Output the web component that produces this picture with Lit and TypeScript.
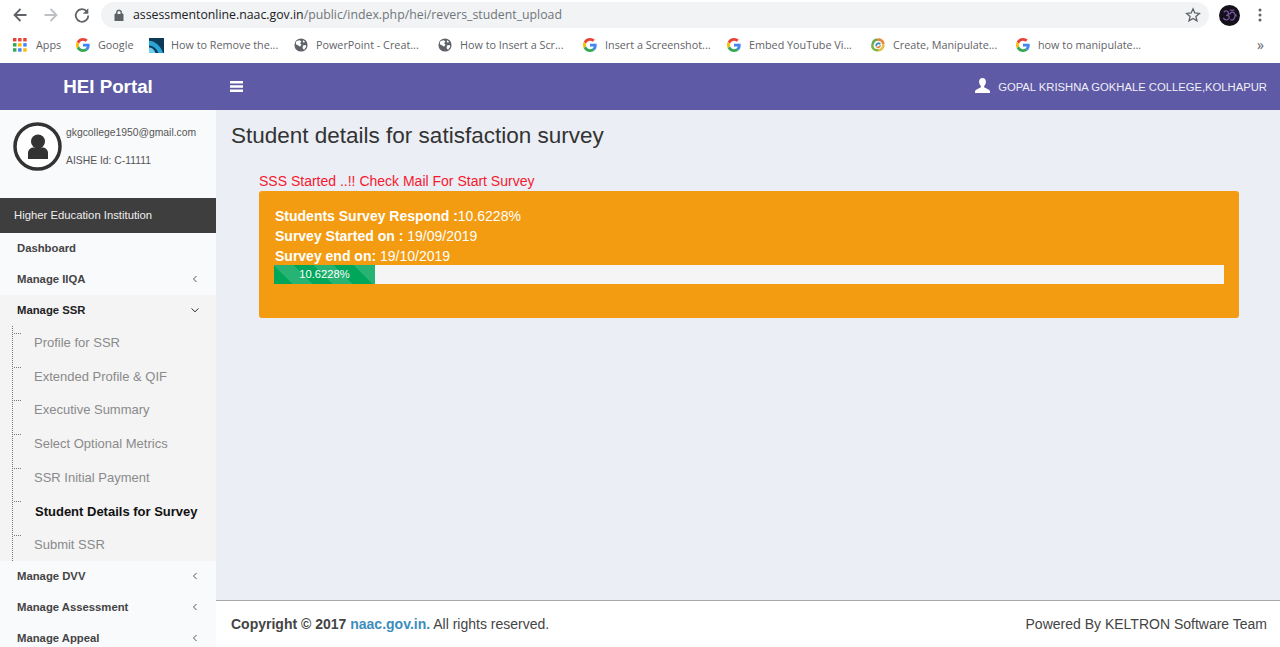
import { LitElement, html, css, svg } from "lit";
import { customElement } from "lit/decorators.js";

const gIcon = html`<svg class="fav" viewBox="0 0 48 48"><path fill="#EA4335" d="M24 9.500c3.500 0 6.700 1.200 9.200 3.600l6.900-6.900C35.900 2.400 30.500 0 24 0 14.600 0 6.500 5.400 2.600 13.200l8 6.200C12.500 13.600 17.800 9.500 24 9.500z"/><path fill="#4285F4" d="M47 24.500c0-1.600-.1-3.100-.4-4.500H24v9h12.900c-.6 3-2.300 5.500-4.800 7.200l7.700 6c4.500-4.200 7.200-10.300 7.200-17.700z"/><path fill="#FBBC05" d="M10.500 28.600c-.5-1.400-.8-3-.8-4.600s.3-3.200.8-4.600l-8-6.200C.9 16.500 0 20.100 0 24s.9 7.500 2.600 10.800l7.900-6.200z"/><path fill="#34A853" d="M24 48c6.500 0 11.900-2.100 15.900-5.800l-7.700-6c-2.200 1.500-4.900 2.300-8.200 2.300-6.200 0-11.500-4.100-13.400-9.900l-8 6.200C6.500 42.600 14.600 48 24 48z"/></svg>`;

const globe = html`<svg class="fav" viewBox="0 0 16 16"><circle cx="8" cy="8" r="7.500" fill="#5f6368"/><path fill="#fff" d="M3 3.500 6.500 2.500 8.500 4 7 6 8.500 7.500 7 10 5 8.500 2.500 7.500 2 5.500zM10 8.500l3.500-.5.500 2-2.500 3.500-1.500-1.500zM10.500 2.500l2 1.500-1 1.500-1.500-1z"/></svg>`;

const appsIcon = html`<svg class="fav apps" viewBox="0 0 13 13">${[
  "#ea4335", "#ea4335", "#ea4335",
  "#34a853", "#fbbc05", "#4285f4",
  "#34a853", "#4285f4", "#fbbc05",
].map((c, i) => svg`<rect x=${(i % 3) * 4.75} y=${Math.floor(i / 3) * 4.75} width="3.200" height="3.200" fill=${c}></rect>`)}</svg>`;

const tileIcon = html`<svg class="fav tile" viewBox="0 0 16 16"><rect width="16" height="16" fill="#0d3b57"/><path d="M0 3 C6 3 12 8 15 16 H10 C8 11 4 8 0 8z" fill="#2aa5d8"/><path d="M0 10 C3 10 6 12 7 16 H0z" fill="#6fd0f0"/></svg>`;

const swirlIcon = html`<svg class="fav" viewBox="0 0 16 16" fill="none" stroke-width="3" stroke-linecap="round"><path d="M8 2C11 1.500 13.500 3.500 14 6" stroke="#e8873a"/><path d="M14 8c.5 3-2 5.500-5 6" stroke="#e3c04a"/><path d="M7 14c-3 0-5.500-2.500-5.500-5.500" stroke="#7cb342"/><path d="M2 6.500C2.500 4 4 2.500 6 2" stroke="#6aa84f"/><path d="M6 8.500C6 6.500 8 5.500 10 6.500" stroke="#3f8fc4" stroke-width="2.200"/><path d="M10.500 9C10 10.500 8.500 11 7 10.500" stroke="#e07f3a" stroke-width="1.800"/></svg>`;

const bookmarks = [
  { icon: appsIcon, label: "Apps", w: 63 },
  { icon: gIcon, label: "Google", w: 73 },
  { icon: tileIcon, label: "How to Remove the...", w: 145 },
  { icon: globe, label: "PowerPoint - Creat...", w: 144 },
  { icon: globe, label: "How to Insert a Scr...", w: 145 },
  { icon: gIcon, label: "Insert a Screenshot...", w: 144 },
  { icon: gIcon, label: "Embed YouTube Vi...", w: 144 },
  { icon: swirlIcon, label: "Create, Manipulate...", w: 145 },
  { icon: gIcon, label: "how to manipulate...", w: 140 },
];

const chevLeft = html`<svg class="chev" viewBox="0 0 10 10"><path d="M6.500 2 3.500 5l3 3" fill="none" stroke="#555" stroke-width="1"/></svg>`;
const chevDown = html`<svg class="chev" viewBox="0 0 10 10"><path d="M1.500 3.500 5 6.800l3.500-3.300" fill="none" stroke="#333" stroke-width="1"/></svg>`;

const submenu = [
  "Profile for SSR",
  "Extended Profile & QIF",
  "Executive Summary",
  "Select Optional Metrics",
  "SSR Initial Payment",
  "Student Details for Survey",
  "Submit SSR",
];

@customElement("app-root")
export class AppRoot extends LitElement {
  static styles = css`
    :host {
      display: flex;
      flex-direction: column;
      width: 1280px;
      height: 647px;
      overflow: hidden;
      background: #fff;
      font-family: "Liberation Sans", Arial, sans-serif;
    }
    .chrome {
      height: 62px;
      flex: none;
      display: flex;
      flex-direction: column;
      background: #fff;
      font-family: "Open Sans", "Liberation Sans", sans-serif;
    }
    .toolbar {
      height: 30px;
      flex: none;
      display: flex;
      align-items: center;
      padding: 0 0 0 10px;
    }
    .nav {
      width: 20px;
      height: 20px;
      margin-right: 11px;
      flex: none;
    }
    .reload {
      width: 18px;
      height: 18px;
      margin-left: 1px;
    }
    .url {
      width: 1108px;
      margin-left: -1px;
      height: 26px;
      flex: none;
      border-radius: 13px;
      background: #f1f3f4;
      display: flex;
      align-items: center;
      padding: 0 8px 0 12px;
      box-sizing: border-box;
      font-size: 12.300px;
      color: #70757a;
      margin-top: -1px;
    }
    .url b {
      font-weight: 400;
      color: #202124;
    }
    .lock {
      width: 12px;
      height: 12px;
      margin-right: 8px;
      flex: none;
    }
    .urltext {
      flex: 1;
      white-space: nowrap;
    }
    .star {
      width: 16px;
      height: 16px;
      flex: none;
    }
    .avatar {
      width: 21px;
      height: 21px;
      margin-left: 10px;
      flex: none;
    }
    .dots {
      width: 16px;
      height: 16px;
      margin-left: 12px;
      flex: none;
    }
    .bookmarks {
      flex: 1;
      display: flex;
      align-items: center;
      padding: 0 0 2px 13px;
      font-size: 10.800px;
      color: #5f6368;
    }
    .bm {
      display: flex;
      align-items: center;
      gap: 8px;
      flex: none;
      white-space: nowrap;
    }
    .bm span {
      margin-top: -2px;
    }
    .fav {
      width: 14px;
      height: 14px;
      flex: none;
    }
    .tile {
      width: 15px;
      height: 15px;
      margin-right: -1px;
    }
    .apps {
      margin-right: 1px;
    }
    .more {
      margin-left: auto;
      margin-right: 16px;
      font-size: 14px;
      line-height: 14px;
      color: #5f6368;
    }
    .topbar {
      height: 47px;
      margin-top: 1px;
      flex: none;
      background: #5e5aa5;
      display: flex;
      align-items: center;
      color: #fff;
    }
    .brand {
      width: 216px;
      flex: none;
      text-align: center;
      font-size: 18.750px;
      font-weight: 700;
    }
    .burger {
      width: 13px;
      height: 11px;
      margin-left: 14px;
      flex: none;
    }
    .user {
      margin-left: auto;
      margin-right: 13px;
      display: flex;
      align-items: center;
      gap: 8px;
      font-size: 11.250px;
      color: #f0eff8;
    }
    .user svg {
      width: 15px;
      height: 15px;
      margin-top: -3px;
    }
    .body {
      flex: 1;
      min-height: 0;
      display: flex;
    }
    .side {
      width: 216px;
      flex: none;
      background: #f9fafc;
      color: #444;
      overflow: hidden;
    }
    .panel {
      height: 88px;
      display: flex;
      box-sizing: border-box;
      padding: 12px 0 0 13px;
    }
    .pic {
      width: 49px;
      height: 49px;
      flex: none;
    }
    .info {
      margin-left: 4px;
      font-size: 10.350px;
      color: #555;
      line-height: 12px;
      padding-top: 5px;
    }
    .info div + div {
      margin-top: 16px;
    }
    .head {
      height: 35px;
      box-sizing: border-box;
      padding: 0 0 2px 14px;
      background: #3e3e3e;
      color: #eee;
      font-size: 11.300px;
      display: flex;
      align-items: center;
    }
    .item {
      height: 31px;
      box-sizing: border-box;
      display: flex;
      align-items: center;
      justify-content: space-between;
      padding: 0 16px 2px 17px;
      font-size: 11.300px;
      font-weight: 700;
      color: #444;
    }
    .item.open {
      background: #f4f4f5;
      color: #222;
    }
    .chev {
      width: 10px;
      height: 10px;
      flex: none;
    }
    .sub {
      background: #f4f4f5;
      height: 235px;
      padding-left: 12px;
    }
    .sub-inner {
      border-left: 1px dotted #777;
      height: 235px;
    }
    .subitem {
      height: 33.700px;
      box-sizing: border-box;
      padding: 0 0 0.500px 21px;
      display: flex;
      align-items: center;
      font-size: 13px;
      color: #8a8a8a;
      position: relative;
    }
    .subitem::before {
      content: "";
      position: absolute;
      left: 1px;
      top: 7px;
      width: 7px;
      border-top: 1px dotted #777;
    }
    .subitem.active {
      color: #111;
      font-weight: 700;
      padding-left: 22px;
      padding-bottom: 0;
    }
    .main {
      flex: 1;
      min-width: 0;
      display: flex;
      flex-direction: column;
      background: #ebeef4;
    }
    .content {
      flex: 1;
      min-height: 0;
      padding: 12px 41px 0 15px;
    }
    h1 {
      margin: 0;
      font-size: 22.500px;
      line-height: 28px;
      font-weight: 400;
      color: #333;
    }
    .card-wrap {
      padding: 22px 0 0 28px;
    }
    .notice {
      font-size: 14px;
      line-height: 19px;
      color: #f5192f;
    }
    .card {
      background: #f39c12;
      border-radius: 3px;
      height: 127px;
      box-sizing: border-box;
      padding: 15px 15px 0 16px;
      color: #fff;
      font-size: 14px;
      line-height: 20px;
    }
    .bar {
      height: 19px;
      background: #f5f5f5;
      margin: -1px 0 0 -1px;
    }
    .fill {
      height: 100%;
      background-color: #00a65a;
      background-image: linear-gradient(
        45deg,
        rgba(255, 255, 255, 0.15) 25%,
        transparent 25%,
        transparent 50%,
        rgba(255, 255, 255, 0.15) 50%,
        rgba(255, 255, 255, 0.15) 75%,
        transparent 75%,
        transparent
      );
      background-size: 40px 40px;
      font-size: 11.200px;
      line-height: 19px;
      text-align: center;
      color: #fff;
    }
    .footer {
      height: 47px;
      flex: none;
      box-sizing: border-box;
      border-top: 1px solid #a8a8a8;
      background: #fff;
      display: flex;
      align-items: center;
      justify-content: space-between;
      padding: 0 13px 0 15px;
      font-size: 14px;
      color: #444;
    }
    .footer a {
      color: #3c8dbc;
      text-decoration: none;
    }
  `;

  render() {
    const pct = 10.6228;
    return html`
      <div class="chrome">
        <div class="toolbar">
          <svg class="nav" viewBox="0 0 20 20"><path d="M16.500 10H5M10.500 4 4.500 10l6 6" fill="none" stroke="#5f6368" stroke-width="1.800"/></svg>
          <svg class="nav" viewBox="0 0 20 20"><path d="M3.500 10H15M9.500 4l6 6-6 6" fill="none" stroke="#bdc1c6" stroke-width="1.800"/></svg>
          <svg class="nav reload" viewBox="0 0 20 20"><path d="M15.500 6.200A7 7 0 1 0 17 10.500" fill="none" stroke="#5f6368" stroke-width="2"/><path d="M17 2.500v6h-6z" fill="#5f6368"/></svg>
          <div class="url">
            <svg class="lock" viewBox="0 0 12 12"><path d="M2 5h8v7H2zM3.500 5V3.500a2.500 2.500 0 0 1 5 0V5" fill="#5f6368" stroke="#5f6368"/><path d="M4.500 5V3.500a1.500 1.500 0 0 1 3 0V5z" fill="#f1f3f4"/></svg>
            <span class="urltext"><b>assessmentonline.naac.gov.in</b>/public/index.php/hei/revers_student_upload</span>
            <svg class="star" viewBox="0 0 16 16"><path d="M8 1.800 9.800 6l4.600.4-3.500 3 1.100 4.500L8 11.500 4 13.900l1.100-4.500-3.500-3L6.200 6z" fill="none" stroke="#5f6368" stroke-width="1.300"/></svg>
          </div>
          <svg class="avatar" viewBox="0 0 22 22"><circle cx="11" cy="11" r="11" fill="#15111a"/><path d="M5 7.500C7 5.500 10 6 10 8.500S7.500 11 7.500 11c3-.5 3.500 1.500 3 3s-4 3-6-.5M11 10c1-2.500 3-3 4.500-2s1.500 4 .5 6-3 2.500-4 1M11.500 5c1.500 1 3 1 4.500 0M16.500 10.500c1-.5 1.500 0 1.500 1.500" fill="none" stroke="#7a5aa8" stroke-width="1.300"/></svg>
          <svg class="dots" viewBox="0 0 16 16"><circle cx="8" cy="3" r="1.500" fill="#5f6368"/><circle cx="8" cy="8" r="1.500" fill="#5f6368"/><circle cx="8" cy="13" r="1.500" fill="#5f6368"/></svg>
        </div>
        <div class="bookmarks">
          ${bookmarks.map(
            (b) => html`<div class="bm" style="width:${b.w}px">${b.icon}<span>${b.label}</span></div>`
          )}
          <span class="more">»</span>
        </div>
      </div>
      <div class="topbar">
        <div class="brand">HEI Portal</div>
        <svg class="burger" viewBox="0 0 13 11"><path d="M0 0h13v2.400H0zM0 4.300h13v2.400H0zM0 8.600h13V11H0z" fill="#fff"/></svg>
        <div class="user">
          <svg viewBox="0 0 15 15"><path d="M7.500 0c2.200 0 3.400 1.700 3.400 3.800 0 1.700-.8 3.300-1.800 4.200v1.200l4.300 2.300c1 .5 1.600 1.300 1.600 2.300V15H0v-1.200c0-1 .6-1.800 1.600-2.300l4.300-2.300V8C4.900 7.100 4.100 5.500 4.100 3.800 4.100 1.700 5.300 0 7.500 0z" fill="#fff"/></svg>
          <span>GOPAL KRISHNA GOKHALE COLLEGE,KOLHAPUR</span>
        </div>
      </div>
      <div class="body">
        <aside class="side">
          <div class="panel">
            <svg class="pic" viewBox="0 0 49 49"><circle cx="24.500" cy="24.500" r="22.500" fill="#fff" stroke="#333" stroke-width="3.500"/><circle cx="25" cy="19.500" r="7" fill="#333"/><path d="M15 37V31c0-3.500 3-5.500 5.500-5.500h9c2.500 0 5.500 2 5.500 5.500v6z" fill="#333"/></svg>
            <div class="info">
              <div>gkgcollege1950@gmail.com</div>
              <div>AISHE Id: C-11111</div>
            </div>
          </div>
          <div class="head">Higher Education Institution</div>
          <div class="item">Dashboard</div>
          <div class="item">Manage IIQA ${chevLeft}</div>
          <div class="item open">Manage SSR ${chevDown}</div>
          <div class="sub">
            <div class="sub-inner">
              ${submenu.map(
                (s) => html`<div class="subitem ${s.startsWith("Student") ? "active" : ""}">${s}</div>`
              )}
            </div>
          </div>
          <div class="item">Manage DVV ${chevLeft}</div>
          <div class="item">Manage Assessment ${chevLeft}</div>
          <div class="item">Manage Appeal ${chevLeft}</div>
        </aside>
        <main class="main">
          <div class="content">
            <h1>Student details for satisfaction survey</h1>
            <div class="card-wrap">
              <div class="notice">SSS Started ..!! Check Mail For Start Survey</div>
              <div class="card">
                <div><b>Students Survey Respond :</b>${pct}%</div>
                <div><b>Survey Started on :</b> 19/09/2019</div>
                <div><b>Survey end on:</b> 19/10/2019</div>
                <div class="bar"><div class="fill" style="width:${pct}%">${pct}%</div></div>
              </div>
            </div>
          </div>
          <footer class="footer">
            <span><b>Copyright © 2017 <a>naac.gov.in.</a></b> All rights reserved.</span>
            <span>Powered By KELTRON Software Team</span>
          </footer>
        </main>
      </div>
    `;
  }
}
